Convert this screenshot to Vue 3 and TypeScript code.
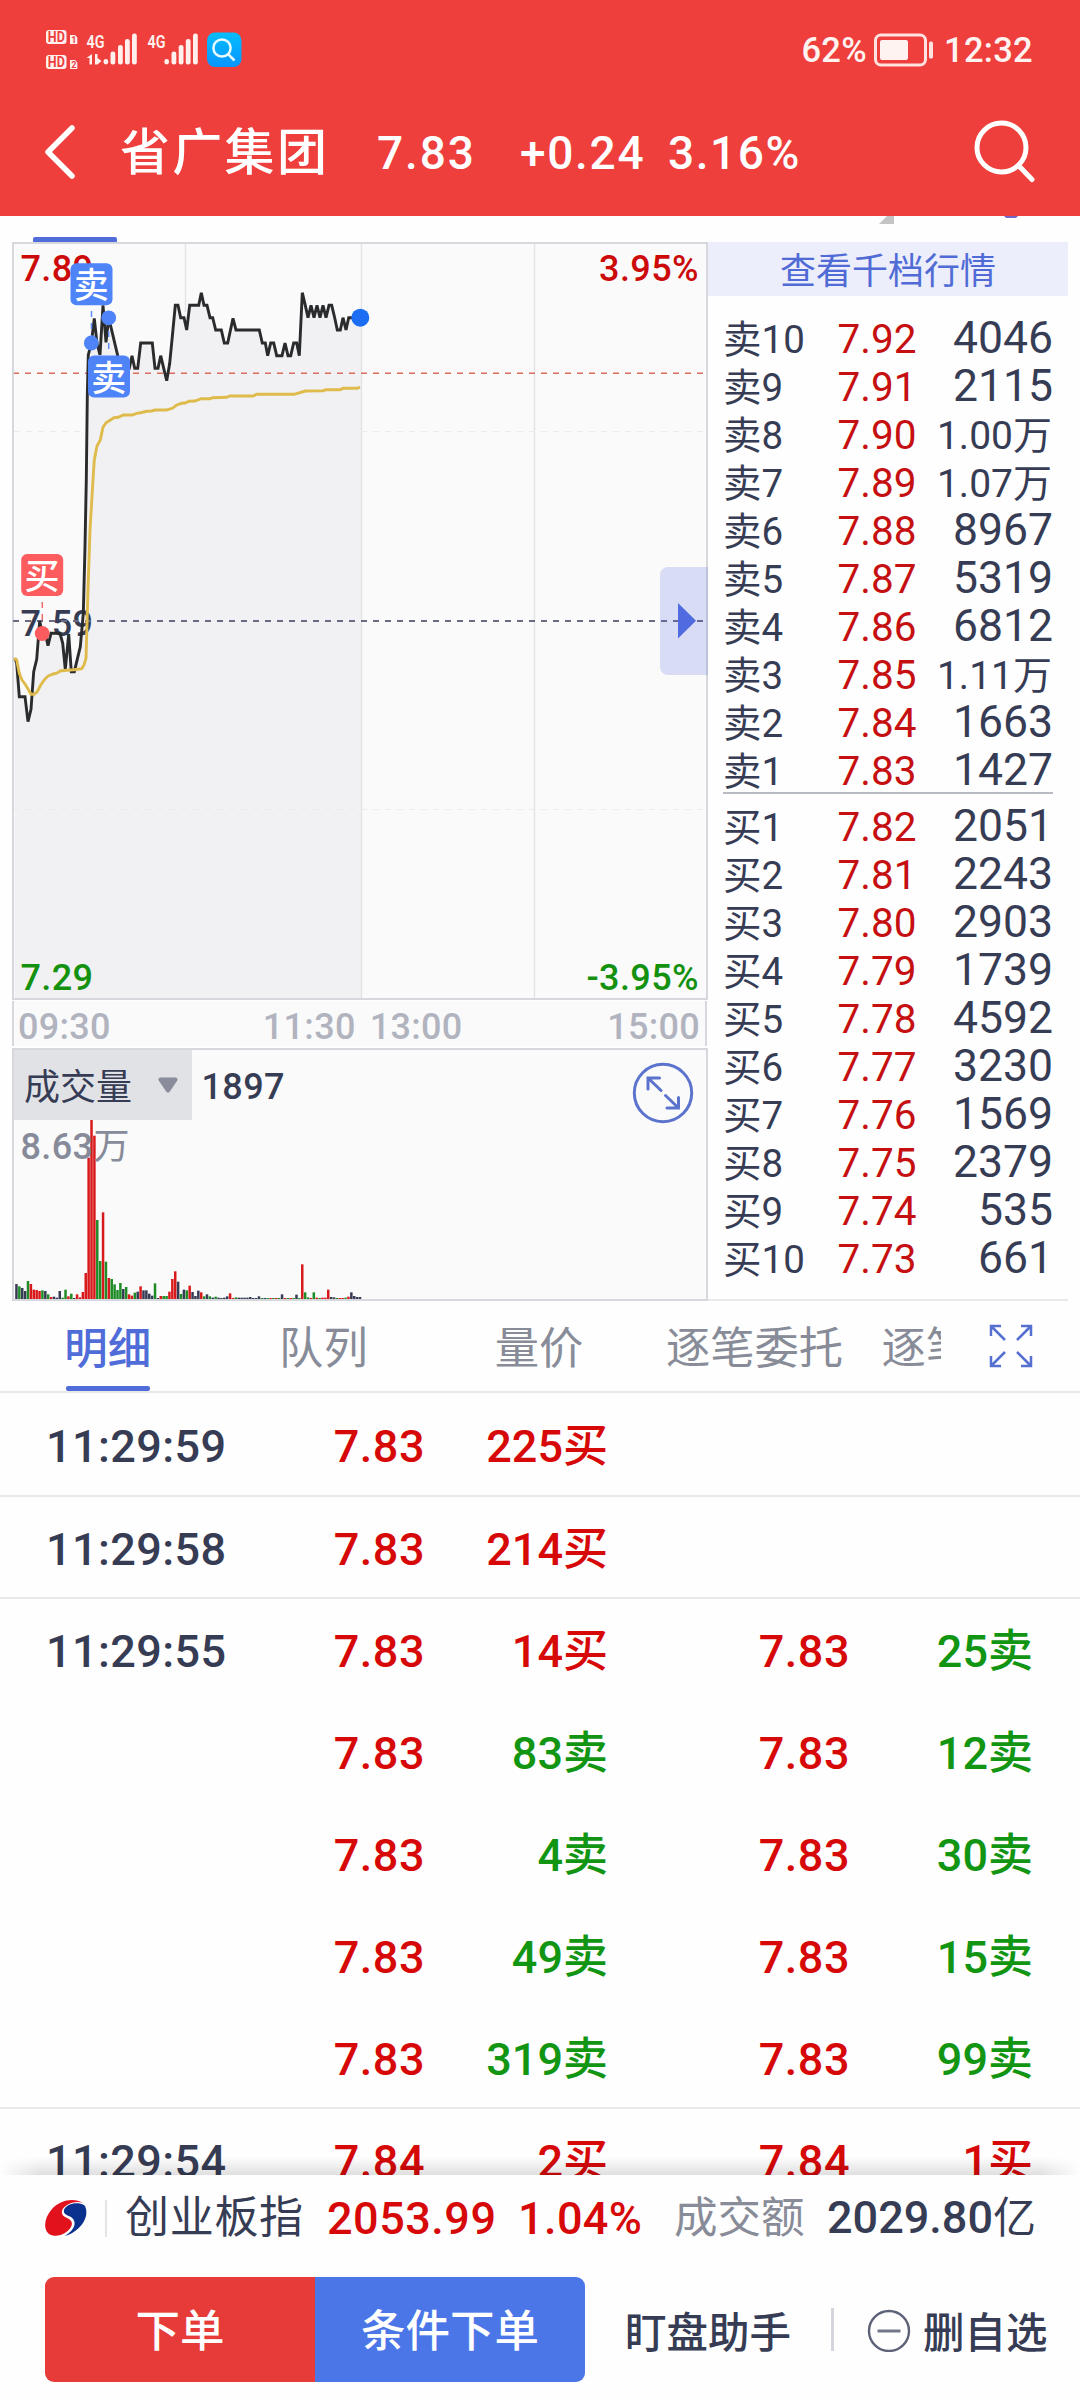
<script setup lang="ts">
type Point = [number, number]
type Tone = 'r' | 'g' | 'n'
interface Level { label: string; price: string; qty: string; unit?: string }
interface Cell { price: string; qty: string; side: '买' | '卖' }
interface Trade { time: string; left: Cell; right?: Cell; last: boolean }

const level = (label: string, price: string, qty: string, unit?: string): Level => ({ label, price, qty, unit })

const sells: Level[] = [
  level('卖10', '7.92', '4046'),
  level('卖9', '7.91', '2115'),
  level('卖8', '7.90', '1.00', '万'),
  level('卖7', '7.89', '1.07', '万'),
  level('卖6', '7.88', '8967'),
  level('卖5', '7.87', '5319'),
  level('卖4', '7.86', '6812'),
  level('卖3', '7.85', '1.11', '万'),
  level('卖2', '7.84', '1663'),
  level('卖1', '7.83', '1427'),
]
const buys: Level[] = [
  level('买1', '7.82', '2051'),
  level('买2', '7.81', '2243'),
  level('买3', '7.80', '2903'),
  level('买4', '7.79', '1739'),
  level('买5', '7.78', '4592'),
  level('买6', '7.77', '3230'),
  level('买7', '7.76', '1569'),
  level('买8', '7.75', '2379'),
  level('买9', '7.74', '535'),
  level('买10', '7.73', '661'),
]

const tabs = ['明细', '队列', '量价', '逐笔委托', '逐笔成交']

const cell = (price: string, qty: string, side: '买' | '卖'): Cell => ({ price, qty, side })
const trades: Trade[] = [
  { time: '11:29:59', left: cell('7.83', '225', '买'), last: true },
  { time: '11:29:58', left: cell('7.83', '214', '买'), last: true },
  { time: '11:29:55', left: cell('7.83', '14', '买'), right: cell('7.83', '25', '卖'), last: false },
  { time: '', left: cell('7.83', '83', '卖'), right: cell('7.83', '12', '卖'), last: false },
  { time: '', left: cell('7.83', '4', '卖'), right: cell('7.83', '30', '卖'), last: false },
  { time: '', left: cell('7.83', '49', '卖'), right: cell('7.83', '15', '卖'), last: false },
  { time: '', left: cell('7.83', '319', '卖'), right: cell('7.83', '99', '卖'), last: true },
  { time: '11:29:54', left: cell('7.84', '2', '买'), right: cell('7.84', '1', '买'), last: false },
]

// Chart samples are stored on a grid three times finer than the drawing, measured from y = -12.
const priceSamples: Point[] = [
  [45, 1285], [50, 1300], [58, 1400], [75, 1400], [84, 1475], [93, 1438], [101, 1325], [110, 1288],
  [119, 1173], [127, 1210], [136, 1210], [144, 1247], [153, 1210], [180, 1210], [188, 1240],
  [196, 1318], [206, 1212], [214, 1325], [223, 1325], [241, 1250], [250, 1150], [255, 950],
  [259, 750], [262, 500], [265, 375], [274, 340], [283, 265], [291, 340], [300, 375], [309, 226],
  [318, 337], [326, 263], [353, 377], [362, 415], [388, 415], [396, 377], [404, 415], [413, 415],
  [422, 339], [457, 339], [465, 415], [474, 415], [482, 377], [491, 415], [500, 452], [509, 400],
  [517, 320], [526, 226], [534, 226], [542, 263], [552, 263], [560, 300], [569, 226], [596, 226],
  [604, 188], [612, 226], [621, 226], [630, 263], [638, 263], [647, 300], [664, 300], [673, 339],
  [683, 339], [699, 265], [708, 300], [778, 300], [787, 339], [796, 339], [803, 377], [812, 339],
  [821, 339], [830, 377], [846, 377], [855, 339], [864, 377], [872, 377], [881, 339], [890, 339],
  [898, 377], [907, 188], [916, 226], [924, 263], [933, 226], [942, 263], [951, 226], [960, 263],
  [969, 226], [978, 263], [987, 226], [995, 226], [1004, 263], [1012, 300], [1021, 300],
  [1029, 263], [1038, 300], [1046, 263], [1080, 263],
]
const averageSamples: Point[] = [
  [42, 1285], [50, 1290], [58, 1330], [66, 1350], [75, 1362], [84, 1377], [93, 1393], [103, 1393],
  [112, 1385], [122, 1365], [135, 1347], [145, 1338], [160, 1332], [172, 1329], [180, 1323],
  [200, 1321], [222, 1319], [245, 1316], [252, 1305], [258, 1285], [264, 1080], [270, 900],
  [279, 750], [283, 690], [291, 648], [301, 630], [309, 592], [318, 578], [342, 563], [355, 562],
  [370, 555], [397, 555], [410, 550], [422, 548], [440, 544], [455, 543], [465, 540], [500, 540],
  [517, 535], [530, 525], [545, 520], [555, 519], [567, 514], [585, 513], [604, 506], [630, 506],
  [638, 503], [680, 502], [690, 498], [760, 498], [770, 493], [882, 493], [916, 483], [970, 482],
  [978, 479], [1020, 479], [1030, 475], [1072, 475], [1080, 471],
]
const toPoints = (list: Point[]): string =>
  list.map(([x, y]) => `${(x / 3).toFixed(1)},${(y / 3 - 12).toFixed(1)}`).join(' ')
const pricePoints = toPoints(priceSamples)
const averagePoints = toPoints(averageSamples)
const areaPoints = `15,756 ${pricePoints} 361,76 361,756`

const volumes =
  'n45 g38 n33 n24 g54 r45 r28 r27 r24 g26 n24 g14 r6 n7 n4 n24 g4 g28 r8 g16 n3 r14 r5 r21 r78 r424 r537 r490 g237 g114 ' +
  'r260 g112 r63 g60 g44 g27 g48 n30 g36 r14 r10 g19 n22 r38 n26 n26 n16 n10 g47 n3 r9 g9 g9 r22 r60 r83 n52 g15 n28 g26 ' +
  'r40 n21 n9 n25 r20 g8 n14 g8 n4 g7 n4 n3 n4 n8 r17 r3 g5 n4 n4 n4 n4 n6 n3 n3 n8 g3 n3 g3 r3 g3 r3 g3 n14 r3 g3 r3 g3 ' +
  'n13 g3 r104 g20 g5 r3 g20 r4 g3 r4 r4 r28 n6 n5 g3 r3 r3 g4 r7 n20 n9 n6 n6'
const fills: Record<Tone, string> = { r: '#d81a1c', g: '#1f8c28', n: '#373c55' }
const bars = volumes.split(' ').map((item, i) => {
  const height = Number(item.slice(1)) / 3
  return { x: 15.2 + i * 2.887, y: 251 - height, height, fill: fills[item[0] as Tone] }
})
</script>

<template>
  <div class="screen">
    <header class="top">
      <div class="status">
        <svg class="signals" width="200" height="46" viewBox="45 26 200 46">
          <g fill="#fff0ee">
            <rect x="46" y="30" width="20.5" height="14" rx="3" />
            <rect x="46" y="55" width="20.5" height="14" rx="3" />
            <path d="M70 35h5l2.3 2.500V44H70zM70 60h5l2.3 2.500V69H70z" />
            <path d="M92 54v10.500h-2.500v-6.500H86.500zM95 54h2.500v4l4 3-4 3.500H95z" />
            <rect x="103.500" y="59" width="4.800" height="5.500" rx="2.400" />
            <rect x="110.500" y="51.500" width="4.800" height="13" rx="2.200" />
            <rect x="118" y="45" width="4.800" height="19.500" rx="2.200" />
            <rect x="125" y="39" width="4.800" height="25.500" rx="2.200" />
            <rect x="132" y="33.500" width="4.800" height="31" rx="2.200" />
            <rect x="164.300" y="59" width="4.800" height="5.500" rx="2.400" />
            <rect x="171.500" y="51.500" width="4.800" height="13" rx="2.200" />
            <rect x="178.700" y="45" width="4.800" height="19.500" rx="2.200" />
            <rect x="185.800" y="39" width="4.800" height="25.500" rx="2.200" />
            <rect x="193" y="33.500" width="4.800" height="31" rx="2.200" />
            <text x="86.500" y="47.500" class="net" textLength="18" lengthAdjust="spacingAndGlyphs">4G</text>
            <text x="147.500" y="47.500" class="net" textLength="18" lengthAdjust="spacingAndGlyphs">4G</text>
          </g>
          <g fill="#ee3f3d">
            <text x="47.800" y="42" class="hd" textLength="17" lengthAdjust="spacingAndGlyphs">HD</text>
            <text x="47.800" y="67" class="hd" textLength="17" lengthAdjust="spacingAndGlyphs">HD</text>
            <text x="71.300" y="43.300" class="sim">1</text>
            <text x="71.300" y="68.300" class="sim">2</text>
          </g>
          <defs>
            <linearGradient id="blue" x1="0" y1="0" x2="0" y2="1">
              <stop offset="0" stop-color="#05bdfd" />
              <stop offset="1" stop-color="#0894ff" />
            </linearGradient>
          </defs>
          <rect x="207" y="32.500" width="34.500" height="34.500" rx="8" fill="url(#blue)" />
          <g fill="none" stroke="#e8fbff" stroke-width="2.500">
            <circle cx="222" cy="48" r="8.600" />
            <path d="M228.500 54.500 234.500 60.500" />
          </g>
        </svg>
        <div class="power">
          <span>62%</span>
          <svg width="62" height="36" viewBox="0 0 62 36">
            <rect x="2.500" y="3" width="50" height="30" rx="5.500" fill="none" stroke="#ffe3e0" stroke-width="3" />
            <rect x="7" y="8" width="28" height="20" rx="2" fill="#fff3f1" />
            <rect x="56" y="9.500" width="4" height="17" rx="1.500" fill="#ffe3e0" />
          </svg>
          <span>12:32</span>
        </div>
      </div>
      <div class="title">
        <svg width="34" height="60" viewBox="0 0 34 60">
          <path d="M29 5 5 29l24 24" fill="none" stroke="#fff" stroke-width="5.500" stroke-linecap="round" stroke-linejoin="round" />
        </svg>
        <h1>省广集团</h1>
        <span class="last">7.83</span>
        <span class="change">+0.24</span>
        <span class="rate">3.16%</span>
        <svg class="find" width="66" height="66" viewBox="0 0 66 66">
          <g fill="none" stroke="#fff" stroke-width="5" stroke-linecap="round">
            <circle cx="29.500" cy="27.500" r="24.500" />
            <path d="M47 46 60 59.500" />
          </g>
        </svg>
      </div>
    </header>

    <div class="strip">
      <svg width="1080" height="26" viewBox="0 0 1080 26">
        <rect x="33" y="21" width="84" height="6" rx="2" fill="#506cd8" />
        <path d="M879 8l8-8h7v8z" fill="#c4c4c4" />
        <path d="M1004 0h14l-2 2h-10z" fill="#7367c4" />
      </svg>
    </div>

    <main class="quote">
      <section class="charts">
        <svg width="696" height="758" viewBox="12 0 696 758" class="cjk">
          <rect x="13" y="1" width="694" height="756" fill="#fafafb" />
          <polygon :points="areaPoints" fill="#f1f1f4" />
          <path d="M185.500 2V70M361.500 2V756M534.500 2V756" stroke="#e2e2e4" stroke-width="1.300" />
          <g stroke-dasharray="6 6">
            <path d="M361 189.500H706M14 189.500H86M13 567.500H706" stroke="#ebebec" stroke-width="1.200" />
            <path d="M13 131.300H706" stroke="#dc6a60" stroke-width="1.400" />
          </g>
          <path d="M13 1H707V757H13Z" fill="none" stroke="#d7d8dd" stroke-width="2" />
          <g class="mid">
            <text x="20.500" y="39" fill="#cc0a0a">7.89</text>
            <text x="699" y="39" text-anchor="end" fill="#cc0a0a">3.95%</text>
            <text x="20.500" y="394" fill="#373c55">7.59</text>
            <text x="20.500" y="748" fill="#14910f">7.29</text>
            <text x="699" y="748" text-anchor="end" fill="#14910f">-3.95%</text>
          </g>
          <path d="M13 379H706" stroke="#676c80" stroke-width="2" stroke-dasharray="6 6" />
          <polyline :points="pricePoints" fill="none" stroke="#2a2b2c" stroke-width="2.900" />
          <polyline :points="averagePoints" fill="none" stroke="#dfbb4c" stroke-width="2.900" />
          <g fill="none" stroke-width="1.500" stroke-dasharray="6 6">
            <path d="M91.500 69V101M108.700 89V113" stroke="#5f8cf8" />
            <path d="M42.300 360V392" stroke="#f06a6c" />
          </g>
          <circle cx="91.300" cy="101" r="7.400" fill="#4f83f8" />
          <circle cx="108.700" cy="75.800" r="7.400" fill="#4f83f8" />
          <circle cx="42.200" cy="391.500" r="7.400" fill="#fd5c5f" />
          <circle cx="360.300" cy="75.700" r="9" fill="#1b6ef3" />
          <rect x="70.500" y="21.300" width="42" height="42" rx="6" fill="#4f83f8" />
          <rect x="88" y="113.500" width="42" height="42" rx="6" fill="#4f83f8" />
          <rect x="21.200" y="312" width="42" height="42" rx="6" fill="#fd5c5f" />
          <g class="tag">
            <text x="91.200" y="56.300">卖</text>
            <text x="108.800" y="148.500">卖</text>
            <text x="42" y="347">买</text>
          </g>
          <path d="M708 325H668a8 8 0 0 0-8 8V425a8 8 0 0 0 8 8H708Z" fill="#4f6be2" fill-opacity=".2" />
          <path d="M678 361 696 378.800 678 396.500Z" fill="#506be0" />
        </svg>
        <div class="axis">
          <span>09:30</span><span class="noon">11:30</span><span class="after">13:00</span><span class="close">15:00</span>
        </div>
        <svg width="696" height="253" viewBox="12 0 696 253" class="cjk">
          <path d="M13 1H707V252H13Z" fill="#fafafb" stroke="#d7d8dd" stroke-width="2" />
          <rect v-for="(bar, i) in bars" :key="i" :x="bar.x" :y="bar.y" width="2.500" :height="bar.height" :fill="bar.fill" />
          <rect x="14" y="2" width="178" height="70" fill="#e1e2e6" />
          <text x="24" y="52" class="name" fill="#373c55">成交量</text>
          <path d="M160.500 31.500H175.500L168 42.500Z" fill="#888c9b" stroke="#888c9b" stroke-width="4" stroke-linejoin="round" />
          <g class="mid">
            <text x="201.500" y="51" fill="#373c55">1897</text>
            <text x="20.500" y="111" fill="#868a99">8.63<tspan font-weight="400">万</tspan></text>
          </g>
          <g fill="none" stroke="#5b73cc" stroke-width="3" stroke-linecap="round">
            <circle cx="663" cy="45" r="28.700" />
            <path d="M661 42.500 648 30M648 41V30H659.500M665.500 47.500 678.500 60M678.500 49.500V60H667" />
          </g>
        </svg>
      </section>

      <section class="book">
        <div class="banner">查看千档行情</div>
        <div class="levels">
          <div v-for="row in sells" :key="row.label" class="level">
            <span class="label">{{ row.label }}</span>
            <span class="price">{{ row.price }}</span>
            <span class="qty"><small v-if="row.unit">{{ row.qty }}{{ row.unit }}</small><template v-else>{{ row.qty }}</template></span>
          </div>
        </div>
        <div class="levels bids">
          <div v-for="row in buys" :key="row.label" class="level">
            <span class="label">{{ row.label }}</span>
            <span class="price">{{ row.price }}</span>
            <span class="qty">{{ row.qty }}</span>
          </div>
        </div>
      </section>
    </main>

    <nav class="tabs">
      <div class="tablist">
        <span v-for="(tab, i) in tabs" :key="tab" class="tab" :class="{ active: i === 0 }"><b>{{ tab }}</b></span>
      </div>
      <svg width="44" height="44" viewBox="0 0 44 44">
        <path d="M16 16 2 2M2 12V2H12M28 16 42 2M32 2H42V12M16 28 2 42M2 32V42H12M28 28 42 42M42 32V42H32" fill="none" stroke="#5570d0" stroke-width="2.500" />
      </svg>
    </nav>

    <section class="trades">
      <div v-for="(trade, i) in trades" :key="i" class="trade" :class="{ ruled: trade.last, first: i === 0 }">
        <span class="time">{{ trade.time }}</span>
        <span class="deal">{{ trade.left.price }}</span>
        <span class="amount" :class="{ sell: trade.left.side === '卖' }">{{ trade.left.qty }}{{ trade.left.side }}</span>
        <template v-if="trade.right">
          <span class="deal second">{{ trade.right.price }}</span>
          <span class="amount far" :class="{ sell: trade.right.side === '卖' }">{{ trade.right.qty }}{{ trade.right.side }}</span>
        </template>
      </div>
      <div class="shade"></div>
    </section>

    <footer class="bottom">
      <div class="index">
        <svg width="42" height="38" viewBox="0 0 42 38">
          <path d="M38 4C30-1 16 0 7 10-1 19-2 30 4 35c6 4 17 1 22-7 3-6-2-8-6-10-5-3-4-8 2-12 5-3 11-4 16-2z" fill="#e2121c" />
          <path d="M39 6c-7-4-18-1-20 5-1 4 3 5 7 7 6 4 5 12-6 19 10-3 19-11 21-20 1-5 0-9-2-11z" fill="#0b318f" />
        </svg>
        <i class="rule"></i>
        <span class="board">创业板指</span>
        <span class="points">2053.99</span>
        <span class="gain">1.04%</span>
        <span class="turn">成交额</span>
        <span class="total">2029.80<em>亿</em></span>
      </div>
      <div class="actions">
        <button class="order">下单</button>
        <button class="cond">条件下单</button>
        <span class="helper">盯盘助手</span>
        <i class="split"></i>
        <svg width="44" height="44" viewBox="0 0 44 44">
          <circle cx="22" cy="23" r="20" fill="none" stroke="#5d6278" stroke-width="2.400" />
          <path d="M10.500 23H33.500" stroke="#72778a" stroke-width="3" />
        </svg>
        <span class="remove">删自选</span>
      </div>
    </footer>
  </div>
</template>

<style>
body { margin: 0; background: #fefefe; }
</style>

<style scoped>
.screen {
  width: 1080px; height: 2400px; overflow: hidden; background: #fefefe;
  font-family: Roboto, "Noto Sans CJK SC", sans-serif; color: #373c55;
  display: flex; flex-direction: column;
}
.screen svg { display: block; flex: none; }
.screen span { white-space: nowrap; }
.top { height: 216px; background: #ee3f3d; color: #fff; flex: none; }
.status { height: 100px; display: flex; justify-content: space-between; box-sizing: border-box; padding: 0 47px 0 45px; }
.signals { margin-top: 26px; }
.net { font: 600 19px Roboto, sans-serif; }
.hd { font: 700 14px Roboto, sans-serif; }
.sim { font: 700 9px Roboto, sans-serif; }
.power { display: flex; align-items: center; height: 100px; font-size: 34.5px; font-weight: 500; color: #fff3f1; line-height: 100px; letter-spacing: .3px; }
.power svg { margin: 0 9px 0 6px; }
.title { display: flex; align-items: center; height: 106px; padding-left: 43px; line-height: 106px; font-size: 46px; font-weight: 500; letter-spacing: 1.900px; }
.title h1 { margin: 0 0 0 43px; width: 257px; font-size: 50px; font-weight: 500; letter-spacing: 2.300px; line-height: 108px; white-space: nowrap; }
.title .last { width: 143px; }
.title .change { width: 148px; letter-spacing: 1.700px; }
.title .rate { width: 304px; letter-spacing: 1.600px; }
.strip { height: 26px; flex: none; }

.quote { display: flex; height: 1059px; flex: none; padding-left: 12px; }
.charts { width: 696px; flex: none; }
.cjk { font-family: Roboto, "Noto Sans CJK SC", sans-serif; }
.mid { font-size: 36px; font-weight: 500; letter-spacing: .4px; }
.name { font-size: 36px; font-weight: 400; }
.tag { font-size: 35px; font-weight: 500; fill: #fff; text-anchor: middle; }
.axis {
  margin: 1px 1px 2px 0; height: 45px; border: solid #d7d8dd; border-width: 0 2px; box-sizing: border-box;
  background: #fafafb; display: flex; font-size: 36px; font-weight: 500; line-height: 52px; color: #b1b4bf; padding-left: 4px; letter-spacing: .3px;
}
.axis .noon { margin-left: 152px; }
.axis .after { margin-left: 14px; }
.axis .close { margin-left: auto; padding-right: 5px; }
.book { width: 360px; border-bottom: 2px solid #e8e8e8; box-sizing: border-box; height: 1059px; }
.banner { height: 54px; line-height: 60px; background: #eceefb; color: #506bd6; font-size: 36px; text-align: center; margin-bottom: 18px; }
.levels { margin: 0 15px; height: 478px; border-bottom: 2px solid #b9bbc4; }
.levels.bids { margin-top: 8px; border: 0; }
.level { display: grid; grid-template-columns: 97px 114px 1fr; align-items: baseline; height: 48px; line-height: 49px; }
.label { font-size: 38.500px; }
.price { font-size: 40.500px; text-align: center; color: #c50f10; }
.qty { font-size: 44.500px; text-align: right; }
.qty small { font-size: 39px; line-height: 0; padding-right: 1px; }

.tabs { height: 92px; flex: none; border-bottom: 2px solid #e8e8e8; box-sizing: border-box; display: flex; align-items: center; }
.tablist { width: 941px; height: 78px; overflow: hidden; display: flex; margin-right: 48px; align-self: flex-end; }
.tab { width: 215.600px; flex: none; display: flex; flex-direction: column; align-items: center; justify-content: space-between; font-size: 44.300px; line-height: 73px; color: #888c98; }
.tab b { font-weight: 400; }
.tab.active { color: #506cd8; }
.tab.active b { font-weight: 500; font-size: 43.500px; }
.tab.active::after { content: ""; width: 84px; height: 5px; border-radius: 2px; background: #506cd8; }

.trades { height: 782px; flex: none; overflow: hidden; position: relative; }
.trade { display: flex; height: 102px; line-height: 105px; box-sizing: border-box; padding-left: 46px; font-size: 45px; font-weight: 500; }
.trade.first { height: 104px; line-height: 107px; }
.trade.ruled { border-bottom: 2px solid #e8e8e8; }
.time { width: 199px; letter-spacing: .4px; }
.deal { width: 180px; text-align: right; color: #d60808; letter-spacing: .5px; }
.amount { width: 183px; text-align: right; color: #d60808; }
.amount.sell { color: #129512; }
.deal.second { width: 242px; }
.shade {
  position: absolute; left: 0; right: 0; bottom: 0; height: 18px;
  background: linear-gradient(to bottom, rgba(0, 0, 0, 0), rgba(0, 0, 0, .12));
  -webkit-mask-image: linear-gradient(to right, transparent, #000 40px, #000 1040px, transparent);
  mask-image: linear-gradient(to right, transparent, #000 40px, #000 1040px, transparent);
}

.bottom { height: 225px; flex: none; }
.index { height: 86px; display: flex; align-items: center; line-height: 89px; padding-left: 45px; font-size: 45px; font-weight: 500; }
.rule { width: 2px; height: 37px; background: #e4e4e8; margin: 0 18px 0 18px; }
.board { width: 202px; font-size: 44px; font-weight: 400; letter-spacing: .7px; }
.points { width: 191px; color: #d60808; letter-spacing: .5px; }
.gain { width: 156px; color: #d60808; letter-spacing: .4px; }
.turn { width: 153px; font-size: 43.500px; font-weight: 400; color: #888c98; }
.total em { font-style: normal; font-weight: 400; font-size: 43px; }
.actions { display: flex; align-items: center; height: 105px; margin-top: 16px; padding-left: 45px; font-size: 41.500px; font-weight: 500; }
.actions button { height: 105px; width: 270px; border: 0; padding: 5px 0 0; box-sizing: border-box; color: #fff; font: 500 44.500px/100px Roboto, "Noto Sans CJK SC", sans-serif; }
.order { background: #e63b39; border-radius: 9px 0 0 9px; }
.cond { background: #4a76e8; border-radius: 0 9px 9px 0; }
.helper { margin-left: 40px; width: 206px; }
.split { width: 3px; height: 43px; background: #d5d6dd; margin-right: 33px; }
.remove { margin-left: 12px; }
</style>
